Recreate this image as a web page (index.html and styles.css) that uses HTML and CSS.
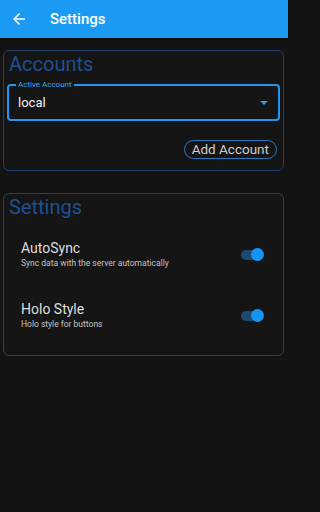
FILE: index.html
```html
<!DOCTYPE html>
<html>
<head>
<meta charset="utf-8">
<link rel="stylesheet" href="styles.css">
</head>
<body>
<div class="screen">
<header class="appbar">
  <svg class="back" viewBox="0 0 24 24" width="18" height="18"><path fill="#fff" d="M20 11H7.83l5.59-5.59L12 4l-8 8 8 8 1.41-1.41L7.83 13H20v-2z"/></svg>
  <span class="title">Settings</span>
</header>
<main class="content">
  <section class="card accounts">
    <h2 class="card-title">Accounts</h2>
    <div class="field">
      <span class="field-label">Active Account</span>
      <span class="field-value">local</span>
      <span class="caret"></span>
    </div>
    <div class="actions">
      <button class="pill">Add Account</button>
    </div>
  </section>
  <section class="card settings">
    <h2 class="card-title">Settings</h2>
    <div class="row">
      <div class="row-text">
        <div class="row-title">AutoSync</div>
        <div class="row-sub">Sync data with the server automatically</div>
      </div>
      <span class="switch"><span class="thumb"></span></span>
    </div>
    <div class="row">
      <div class="row-text">
        <div class="row-title">Holo Style</div>
        <div class="row-sub">Holo style for buttons</div>
      </div>
      <span class="switch"><span class="thumb"></span></span>
    </div>
  </section>
</main>
</div>
</body>
</html>
```
FILE: styles.css
```css
* { box-sizing: border-box; }
html, body { margin: 0; padding: 0; }
html { background: #131313; }
body {
  background: #131313;
  font-family: Roboto, "Noto Sans", sans-serif;
  color: #e0e0e0;
}
.screen {
  width: 288px;
  min-height: 512px;
}
.appbar {
  height: 38px;
  background: #1b9af3;
  display: flex;
  align-items: center;
  padding-left: 10px;
  box-shadow: 0 1px 2px rgba(0,0,0,0.5);
}
.back { display: block; }
.title {
  margin-left: 22px;
  color: #fff;
  font-size: 15px;
  font-weight: 500;
}
.content {
  padding: 12px 4px 0 3px;
  display: flex;
  flex-direction: column;
  gap: 22px;
}
.card {
  border: 1px solid #21406a;
  border-radius: 6px;
  background: #151515;
}
.card-title {
  margin: 0;
  font-size: 20px;
  line-height: 24px;
  font-weight: 400;
  color: #1f4f90;
  padding-left: 4px;
}
.accounts { padding: 1px 3px 11px 3px; }
.accounts .card-title { padding-left: 2px; }
.field {
  position: relative;
  margin-top: 8px;
  height: 37px;
  border: 2px solid #2196f3;
  border-radius: 4px;
  display: flex;
  align-items: center;
  padding-left: 9px;
}
.field-label {
  position: absolute;
  top: -6px;
  left: 7px;
  padding: 0 2px;
  background: #151515;
  color: #3ba2f5;
  font-size: 8px;
  line-height: 10px;
}
.field-value {
  font-size: 13px;
  color: #f2f2f2;
}
.caret {
  position: absolute;
  right: 10px;
  top: 15px;
  width: 0;
  height: 0;
  border-left: 4px solid transparent;
  border-right: 4px solid transparent;
  border-top: 4px solid #2196f3;
}
.actions {
  display: flex;
  justify-content: flex-end;
  margin-top: 19px;
  padding-right: 3px;
}
.pill {
  height: 19px;
  padding: 0 7px;
  border: 1px solid #2c78bd;
  border-radius: 10px;
  background: transparent;
  color: #cfcfcf;
  font-family: Roboto, "Noto Sans", sans-serif;
  font-size: 13.5px;
  line-height: 17px;
}
.settings { padding: 0 0 10px 0; }
.settings .card-title { padding-left: 5px; margin-top: 1px; }
.row {
  display: flex;
  align-items: center;
  justify-content: space-between;
  padding: 16px 20px 16px 17px;
}
.settings .row:first-of-type { margin-top: 4px; }
.row-title {
  font-size: 14px;
  line-height: 18px;
  color: #dedede;
}
.row-sub {
  font-size: 8.5px;
  line-height: 10px;
  color: #c4c4c4;
  margin-top: 1px;
}
.switch {
  position: relative;
  width: 22px;
  height: 10px;
  margin-top: 2px;
  border-radius: 5px;
  background: #1b4a70;
}
.thumb {
  position: absolute;
  right: -1px;
  top: -1.5px;
  width: 13px;
  height: 13px;
  border-radius: 50%;
  background: #1495f5;
}
```
